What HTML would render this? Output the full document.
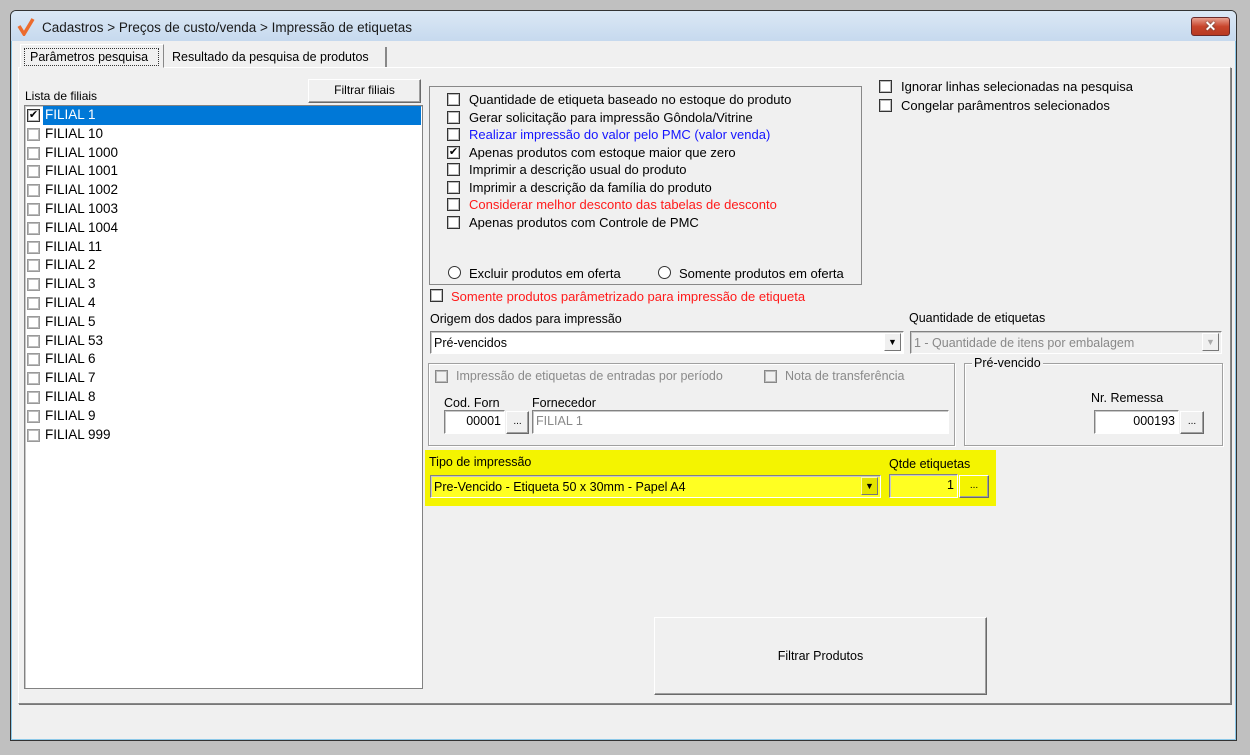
<!DOCTYPE html>
<html><head><meta charset="utf-8"><style>
*{box-sizing:border-box;margin:0;padding:0}
body{width:1250px;height:755px;background:#c0c0c0;position:relative;overflow:hidden;font-family:"Liberation Sans",sans-serif;font-size:12px;color:#000}
.a{position:absolute;white-space:nowrap}
.win{left:10px;top:10px;width:1227px;height:731px;background:#f0f0f0;border:1px solid #333;border-radius:6px 6px 0 0;box-shadow:inset 0 0 0 1px #8cc8e8}
.title{left:11px;top:11px;width:1225px;height:30px;background:linear-gradient(#dbe8f5,#c6d9ee);border-radius:5px 5px 0 0}
.cb{position:absolute;width:13px;height:13px;border:1px solid #333;background:#fff;box-shadow:inset 0 0 0 1px #bbb}
.cb.d{border-color:#888;background:#f0f0f0}
.rb{position:absolute;width:13px;height:13px;border:1px solid #333;border-radius:50%;background:#fff}
.sunk{position:absolute;background:#fff;border:1px solid;border-color:#828282 #fff #fff #828282;box-shadow:inset 1px 1px 0 #c8c8c8}
.btn{position:absolute;background:#f0f0f0;border:1px solid;border-color:#fff #6a6a6a #6a6a6a #fff;box-shadow:inset -1px -1px 0 #a0a0a0;text-align:center}
.grp{position:absolute;border:1px solid #a0a0a0;box-shadow:1px 1px 0 #fff,inset 1px 1px 0 #fff}
.dd{position:absolute;width:17px;height:18px;background:#f0f0f0;border:1px solid;border-color:#fff #777 #777 #fff;font-size:9px;text-align:center;line-height:16px}
</style></head><body>
<div class="a win"></div>
<div class="a title"></div>
<svg class="a" style="left:17px;top:18px" width="18" height="18"><path d="M2 8 L7 16 L16 1" stroke="#ec6b2d" stroke-width="3.5" fill="none"/></svg>
<div class="a" style="left:42px;top:20px;font-size:13.5px;color:#1a1a1a">Cadastros &gt; Preços de custo/venda &gt; Impressão de etiquetas</div>
<div class="a" style="left:1191px;top:17px;width:39px;height:19px;border:1px solid #6b2a2a;border-radius:3px;background:linear-gradient(#e8a090,#c8452c 50%,#b83a22);color:#fff;font-weight:bold;text-align:center;font-size:14px;line-height:16px;text-shadow:0 0 2px #444">✕</div>

<div class="a" style="left:18px;top:67px;width:1213px;height:637px;border:1px solid;border-color:#fff #888 #888 #fff;box-shadow:1px 1px 0 #777"></div>
<div class="a" style="left:20px;top:44px;width:144px;height:24px;background:#f0f0f0;border:1px solid;border-color:#fff #888 #f0f0f0 #fff"></div>
<div class="a" style="left:24px;top:48px;width:135px;height:18px;border:1px dotted #333;padding:1px 5px;font-size:12.5px">Parâmetros pesquisa</div>
<div class="a" style="left:165px;top:47px;width:222px;height:20px;border-right:2px solid #888;padding:3px 7px;font-size:12.5px">Resultado da pesquisa de produtos</div>

<div class="a" style="left:25px;top:89px">Lista de filiais</div>
<div class="btn" style="left:308px;top:79px;width:113px;height:24px;line-height:21px">Filtrar filiais</div>
<div class="a" style="left:24px;top:105px;width:399px;height:584px;background:#fff;border:1px solid #828282;box-shadow:inset 1px 1px 0 #c8c8c8"></div>
<div class="a" style="left:43px;top:106px;width:378px;height:19px;background:#0078d7"></div>
<div class="a" style="left:27px;top:106px;line-height:18.8px;font-size:13.5px">
<div style="position:relative"><span class="cb" style="left:0;top:3px;width:13px;height:13px;text-align:center;font-size:11px;line-height:11px">✔</span><span style="margin-left:18px;color:#fff">FILIAL 1</span></div>
<div style="position:relative"><span class="cb" style="left:0;top:3px;border-color:#999"></span><span style="margin-left:18px">FILIAL 10</span></div>
<div style="position:relative"><span class="cb" style="left:0;top:3px;border-color:#999"></span><span style="margin-left:18px">FILIAL 1000</span></div>
<div style="position:relative"><span class="cb" style="left:0;top:3px;border-color:#999"></span><span style="margin-left:18px">FILIAL 1001</span></div>
<div style="position:relative"><span class="cb" style="left:0;top:3px;border-color:#999"></span><span style="margin-left:18px">FILIAL 1002</span></div>
<div style="position:relative"><span class="cb" style="left:0;top:3px;border-color:#999"></span><span style="margin-left:18px">FILIAL 1003</span></div>
<div style="position:relative"><span class="cb" style="left:0;top:3px;border-color:#999"></span><span style="margin-left:18px">FILIAL 1004</span></div>
<div style="position:relative"><span class="cb" style="left:0;top:3px;border-color:#999"></span><span style="margin-left:18px">FILIAL 11</span></div>
<div style="position:relative"><span class="cb" style="left:0;top:3px;border-color:#999"></span><span style="margin-left:18px">FILIAL 2</span></div>
<div style="position:relative"><span class="cb" style="left:0;top:3px;border-color:#999"></span><span style="margin-left:18px">FILIAL 3</span></div>
<div style="position:relative"><span class="cb" style="left:0;top:3px;border-color:#999"></span><span style="margin-left:18px">FILIAL 4</span></div>
<div style="position:relative"><span class="cb" style="left:0;top:3px;border-color:#999"></span><span style="margin-left:18px">FILIAL 5</span></div>
<div style="position:relative"><span class="cb" style="left:0;top:3px;border-color:#999"></span><span style="margin-left:18px">FILIAL 53</span></div>
<div style="position:relative"><span class="cb" style="left:0;top:3px;border-color:#999"></span><span style="margin-left:18px">FILIAL 6</span></div>
<div style="position:relative"><span class="cb" style="left:0;top:3px;border-color:#999"></span><span style="margin-left:18px">FILIAL 7</span></div>
<div style="position:relative"><span class="cb" style="left:0;top:3px;border-color:#999"></span><span style="margin-left:18px">FILIAL 8</span></div>
<div style="position:relative"><span class="cb" style="left:0;top:3px;border-color:#999"></span><span style="margin-left:18px">FILIAL 9</span></div>
<div style="position:relative"><span class="cb" style="left:0;top:3px;border-color:#999"></span><span style="margin-left:18px">FILIAL 999</span></div>
</div>

<div class="a" style="left:429px;top:86px;width:433px;height:199px;border:1px solid #888"></div>
<div class="a" style="left:447px;top:91px;line-height:17.5px;font-size:13px">
<div style="position:relative"><span class="cb" style="left:0;top:2px"></span><span style="margin-left:22px">Quantidade de etiqueta baseado no estoque do produto</span></div>
<div style="position:relative"><span class="cb" style="left:0;top:2px"></span><span style="margin-left:22px">Gerar solicitação para impressão Gôndola/Vitrine</span></div>
<div style="position:relative"><span class="cb" style="left:0;top:2px"></span><span style="margin-left:22px;color:#1414ff">Realizar impressão do valor pelo PMC (valor venda)</span></div>
<div style="position:relative"><span class="cb" style="left:0;top:2px;text-align:center;font-size:11px;line-height:11px">✔</span><span style="margin-left:22px">Apenas produtos com estoque maior que zero</span></div>
<div style="position:relative"><span class="cb" style="left:0;top:2px"></span><span style="margin-left:22px">Imprimir a descrição usual do produto</span></div>
<div style="position:relative"><span class="cb" style="left:0;top:2px"></span><span style="margin-left:22px">Imprimir a descrição da família do produto</span></div>
<div style="position:relative"><span class="cb" style="left:0;top:2px"></span><span style="margin-left:22px;color:#ff1a1a">Considerar melhor desconto das tabelas de desconto</span></div>
<div style="position:relative"><span class="cb" style="left:0;top:2px"></span><span style="margin-left:22px">Apenas produtos com Controle de PMC</span></div>
</div>
<div class="rb" style="left:448px;top:266px"></div><div class="a" style="left:469px;top:266px;font-size:13px">Excluir produtos em oferta</div>
<div class="rb" style="left:658px;top:266px"></div><div class="a" style="left:679px;top:266px;font-size:13px">Somente produtos em oferta</div>

<div class="cb" style="left:879px;top:80px"></div><div class="a" style="left:901px;top:79px;font-size:13px">Ignorar linhas selecionadas na pesquisa</div>
<div class="cb" style="left:879px;top:99px"></div><div class="a" style="left:901px;top:98px;font-size:13px">Congelar parâmentros selecionados</div>

<div class="cb" style="left:430px;top:289px"></div><div class="a" style="left:451px;top:289px;font-size:13px;color:#ff1a1a">Somente produtos parâmetrizado para impressão de etiqueta</div>

<div class="a" style="left:430px;top:312px;font-size:12.5px">Origem dos dados para impressão</div>
<div class="sunk" style="left:430px;top:331px;width:474px;height:23px;padding:4px 3px;font-size:12.5px">Pré-vencidos</div>
<div class="dd" style="left:884px;top:333px">▼</div>
<div class="a" style="left:909px;top:311px;font-size:12.5px">Quantidade de  etiquetas</div>
<div class="sunk" style="left:910px;top:331px;width:312px;height:23px;padding:4px 3px;font-size:12.5px;color:#888;background:#f0f0f0">1 - Quantidade de itens por embalagem</div>
<div class="dd" style="left:1202px;top:333px;color:#aaa">▼</div>

<div class="grp" style="left:428px;top:363px;width:527px;height:83px"></div>
<div class="cb d" style="left:435px;top:370px"></div><div class="a" style="left:456px;top:369px;color:#8a8a8a;font-size:12.5px">Impressão de etiquetas de entradas por período</div>
<div class="cb d" style="left:764px;top:370px"></div><div class="a" style="left:785px;top:369px;color:#8a8a8a;font-size:12.5px">Nota de transferência</div>
<div class="a" style="left:444px;top:396px;font-size:12.5px">Cod. Forn</div>
<div class="sunk" style="left:444px;top:410px;width:61px;height:24px;text-align:right;padding:3px 3px;font-size:12.5px">00001</div>
<div class="btn" style="left:506px;top:411px;width:23px;height:23px;line-height:20px;font-size:10px">...</div>
<div class="a" style="left:532px;top:396px;font-size:12.5px">Fornecedor</div>
<div class="sunk" style="left:532px;top:410px;width:417px;height:24px;padding:3px 3px;font-size:12.5px;color:#888">FILIAL 1</div>

<div class="grp" style="left:964px;top:363px;width:259px;height:83px"></div>
<div class="a" style="left:972px;top:356px;background:#f0f0f0;padding:0 2px;font-size:12.5px">Pré-vencido</div>
<div class="a" style="left:1091px;top:391px;font-size:12.5px">Nr. Remessa</div>
<div class="sunk" style="left:1094px;top:410px;width:85px;height:24px;text-align:right;padding:3px 3px;font-size:12.5px">000193</div>
<div class="btn" style="left:1180px;top:411px;width:24px;height:23px;line-height:20px;font-size:10px">...</div>

<div class="a" style="left:425px;top:450px;width:571px;height:56px;background:#f4f400"></div>
<div class="a" style="left:429px;top:455px;font-size:12.5px">Tipo de impressão</div>
<div class="sunk" style="left:430px;top:475px;width:451px;height:23px;padding:4px 3px;font-size:12.5px;background:#ffff22">Pre-Vencido - Etiqueta 50 x 30mm - Papel A4</div>
<div class="dd" style="left:861px;top:477px;background:#e4e400;border-color:#ffffa0 #777 #777 #ffffa0">▼</div>
<div class="a" style="left:889px;top:457px;font-size:12.5px">Qtde etiquetas</div>
<div class="sunk" style="left:889px;top:474px;width:69px;height:24px;text-align:right;padding:3px 3px;font-size:12.5px;background:#ffff22">1</div>
<div class="btn" style="left:959px;top:475px;width:30px;height:23px;line-height:20px;font-size:10px;background:#f4f400">...</div>

<div class="btn" style="left:654px;top:617px;width:333px;height:78px;line-height:76px;font-size:12.5px">Filtrar Produtos</div>
</body></html>
